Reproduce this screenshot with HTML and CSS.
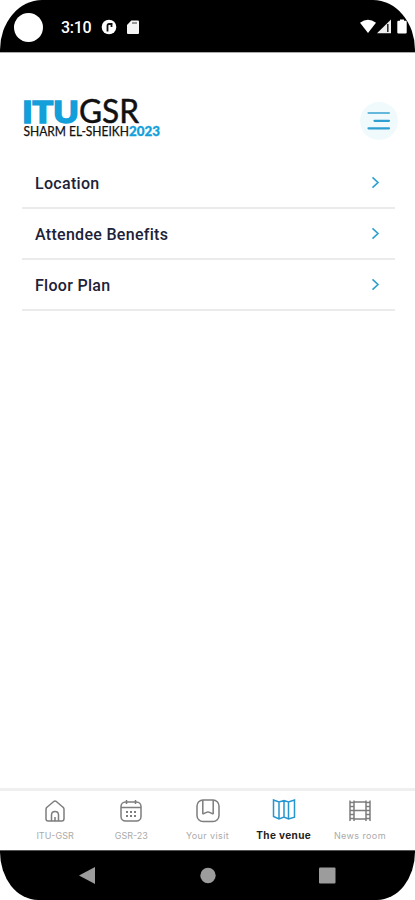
FILE: index.html
```
<!DOCTYPE html>
<html lang="en">
<head>
<meta charset="utf-8">
<title>ITU GSR – The venue</title>
<link rel="stylesheet" href="styles.css">
</head>
<body>
<div class="phone">
  <div class="status">
    <span class="camera"></span>
    <span class="time">3:10</span>
    <svg class="notif" width="16" height="16" viewBox="0 0 16 16"><circle cx="8" cy="8" r="7.300" fill="#fff"/><path d="M6.500 12.500V6.500Q6.500 5 8 5h3.500M10.500 4v4" fill="none" stroke="#111" stroke-width="1.800"/></svg>
    <svg class="card" width="12" height="14" viewBox="0 0 12 14"><path d="M4.300 .5H11q1 0 1 1V13q0 1-1 1H1q-1 0-1-1V5z" fill="#f4f4f4"/><path d="M5 3h5" stroke="#777" stroke-width="1.500"/></svg>
    <svg class="signals" width="48" height="16" viewBox="0 0 48 16"><path d="M0 3.700Q8-2.200 16 3.700L8 14z" fill="#fff"/><path d="M17 14.300L31 .5v13.800z" fill="#eee"/><path d="M27.800 5v8" stroke="#222" stroke-width="1.500"/><path d="M40 .5h4v1.300h1.700q1 0 1 1v10.700q0 1-1 1h-7.400q-1 0-1-1V2.800q0-1 1-1H40z" fill="#fff"/></svg>
  </div>
  <main>
    <header>
      <svg class="logo" width="140" height="42" viewBox="0 0 140 42">
        <text class="itu" x="-.8" y="25.800" textLength="56.500" lengthAdjust="spacingAndGlyphs">ITU</text>
        <text class="gsr" x="56" y="26" textLength="60" lengthAdjust="spacingAndGlyphs">GSR</text>
        <text class="city" x=".5" y="38.800" textLength="105.500" lengthAdjust="spacingAndGlyphs">SHARM EL-SHEIKH</text>
        <text class="year" x="106" y="38.800" textLength="31" lengthAdjust="spacingAndGlyphs">2023</text>
      </svg>
      <span class="menu"><svg width="24" height="20" viewBox="0 0 24 20"><path d="M1.500 2h20.500" stroke="#65b8dd"/><path d="M7.500 9.800h14.500M1.500 17.300h20.500" stroke="#2f9fd1"/></svg></span>
    </header>
    <ul class="list">
      <li><span>Location</span><svg width="9" height="13" viewBox="0 0 9 13"><path d="M1.500 1.300L7 6.500 1.500 11.700"/></svg></li>
      <li><span>Attendee Benefits</span><svg width="9" height="13" viewBox="0 0 9 13"><path d="M1.500 1.300L7 6.500 1.500 11.700"/></svg></li>
      <li><span>Floor Plan</span><svg width="9" height="13" viewBox="0 0 9 13"><path d="M1.500 1.300L7 6.500 1.500 11.700"/></svg></li>
    </ul>
  </main>
  <nav class="tabs">
    <div class="tab"><svg width="24" height="24" viewBox="0 0 24 24"><path d="M3 10.200Q3 9 4 8.200L11 2.300q1-.8 2 0l7 5.900q1 .8 1 2v9.500q0 2.300-2.300 2.300H5.300Q3 22 3 19.700zM8.500 22v-6q0-3.500 3.500-3.500t3.500 3.500v6M12 22v-4"/></svg><span>ITU-GSR</span></div>
    <div class="tab"><svg width="24" height="24" viewBox="0 0 24 24"><rect x="2" y="3" width="20" height="19" rx="4.500"/><path d="M2 8.500h20M7.500 1v4M16.500 1v4"/><path class="dots" d="M7 13h2M11 13h2M15 13h2M7 17h2M11 17h2M15 17h2"/></svg><span>GSR-23</span></div>
    <div class="tab"><svg width="24" height="24" viewBox="0 0 24 24"><rect x="1" y="1" width="22" height="21.500" rx="6"/><path d="M6.800 1v13.200q0 1 .9.400l3.400-1.500q.9-.4 1.800 0l3.400 1.500q.9.600.9-.4V1"/></svg><span class="wide">Your visit</span></div>
    <div class="tab active"><svg width="24" height="24" viewBox="0 0 24 24"><path d="M1.500 1l5.500 2L12 1.500l4.500 1.500L22.500 1v17.200L16.500 20 12 18 7 20 1.500 17.500zM7 3v17M12 1.500V18M16.500 3v17"/></svg><span>The venue</span></div>
    <div class="tab"><svg width="24" height="24" viewBox="0 0 24 24"><path d="M2 1.500v20.500M6 1.500v20.500M18 1.500v20.500M22 1.500v20.500M6 3h12M6 11.500h12M6 20h12"/><path d="M2 3.500h4M2 7.500h4M2 11.500h4M2 15.500h4M2 19.500h4M18 3.500h4M18 7.500h4M18 11.500h4M18 15.500h4M18 19.500h4"/></svg><span class="wide">News room</span></div>
  </nav>
  <div class="sysnav">
    <svg width="260" height="20" viewBox="0 0 260 20"><path d="M1 9.500L17 1v17z"/><circle cx="130" cy="9.500" r="7.700"/><rect x="241" y="1.500" width="16.500" height="16" rx="1"/></svg>
  </div>
</div>
</body>
</html>
```
FILE: styles.css
```
* { box-sizing: border-box; }
body { margin: 0; background: #fff; font-family: Roboto, sans-serif; }
.phone { width: 415px; height: 900px; display: flex; flex-direction: column; background: #fff; }
.status { height: 53px; background: #000; border-bottom: 1px solid #aaa; border-radius: 42px 42px 0 0 / 50px 50px 0 0; display: flex; align-items: center; padding: 2px 7px 0 14px; }
.camera { width: 29px; height: 29px; border-radius: 50%; background: #fff; }
.time { margin-left: 18px; width: 30px; color: #fff; font-size: 16px; font-weight: 500; line-height: 20px; white-space: nowrap; letter-spacing: -.3px; padding-top: 1px; }
.notif { margin-left: 10px; }
.card { margin-left: 10px; }
.signals { margin-left: auto; }
main { flex: 1; padding: 44px 20px 0 22px; }
header { display: flex; justify-content: space-between; height: 61px; }
.logo { margin-left: 1px; overflow: visible; }
.logo text { font-family: Lato, sans-serif; }
.logo .itu { font-size: 31px; font-weight: 900; fill: #139fda; stroke: #139fda; stroke-width: 1.6; }
.logo .gsr { font-size: 32px; font-weight: 400; fill: #111; stroke: #111; stroke-width: .5; }
.logo .city { font-size: 12.5px; font-weight: 400; fill: #111; stroke: #111; stroke-width: .25; }
.logo .year { font-size: 12.5px; font-weight: 900; fill: #139fda; stroke: #139fda; stroke-width: .3; }
.menu { width: 38px; height: 38px; margin: 5px -3px 0 0; border-radius: 50%; background: #f0fafd; display: flex; align-items: center; justify-content: center; }
.menu svg { margin-left: -1px; }
.menu path { stroke-width: 2.2; stroke-linecap: round; }
.list { list-style: none; margin: 0; padding: 0; }
.list li { height: 51px; border-bottom: 2px solid #ebebeb; display: flex; align-items: center; justify-content: space-between; padding: 0 15px 0 13px; font-size: 16px; font-weight: 500; color: #202238; letter-spacing: .3px; }
.list span { padding-top: 2px; }
.list path { fill: none; stroke: #2c9fce; stroke-width: 1.6; }
.tabs { height: 62px; border-top: 3px solid #efefef; display: flex; padding: 8px 17px 0; }
.tab { flex: 1; display: flex; flex-direction: column; align-items: center; color: #aaa; font: 400 9px/12px Inter, sans-serif; white-space: nowrap; }
.tab svg { fill: none; stroke: #7d7d7d; stroke-width: 1.5; }
.tab span { margin-top: 7px; }
.tab .wide { letter-spacing: .4px; }
.tab .dots { stroke-width: 2; }
.tab.active { color: #222; font-weight: 700; font-size: 10px; letter-spacing: .4px; }
.tab.active span { margin-top: 6px; }
.tab.active svg { stroke: #2795cf; }
.sysnav { height: 50px; background: #000; border-top: 1px solid #555; border-radius: 0 0 38px 38px / 0 0 48px 48px; display: flex; justify-content: center; padding-top: 15px; }
.sysnav svg { fill: #9c9c9c; }
```
